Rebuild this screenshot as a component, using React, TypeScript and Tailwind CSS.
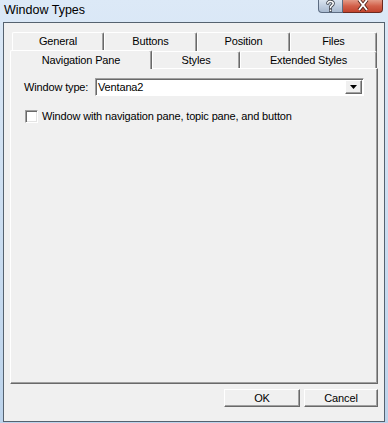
import React from "react";

const font = { fontFamily: '"Liberation Sans", Arial, sans-serif' };

function Tab({ label, w, h, top }: { label: string; w: string; h: string; top?: boolean }) {
  return (
    <div
      className={`${w} ${h} flex items-center justify-center border-l border-t border-white border-r border-r-[#696969] rounded-tl-[2px] rounded-tr-[2px] shadow-[inset_-1px_0_0_#a0a0a0] bg-[#f0f0f0] text-[11px] tracking-[-0.15px] text-black`}
    >
      <span className={top ? "-mt-[2px]" : ""}>{label}</span>
    </div>
  );
}

function ClassicButton({ label, w }: { label: string; w: string }) {
  return (
    <div
      className={`${w} h-[18px] flex items-center justify-center bg-[#f0f0f0] border border-white border-r-[#696969] border-b-[#696969] shadow-[inset_-1px_-1px_0_#a0a0a0] text-[11px] tracking-[-0.15px] text-black`}
    >
      {label}
    </div>
  );
}

export default function App() {
  return (
    <div
      className="w-[388px] h-[423px] flex flex-col bg-gradient-to-b from-[#dce9f7] to-[#bcd3eb] overflow-hidden"
      style={font}
    >
      {/* Title bar */}
      <div className="h-[22px] flex items-start shrink-0">
        <div className="pl-[4px] pt-[3px] text-[12.5px] leading-[14px] text-black">Window Types</div>
        <div className="ml-auto mr-[5px] flex items-start">
          <div className="w-[25px] h-[13px] rounded-bl-[4px] border border-t-0 border-[#5c6c82] bg-gradient-to-b from-[#d9e3ef] to-[#a9bad0] flex items-start justify-center overflow-hidden">
            <svg width="9" height="12" viewBox="0 0 9 12">
              <path d="M1.8 3.2 C1.8 0.8 7.2 0.8 7.2 3.4 C7.2 5.4 4.5 5.4 4.5 7.6" fill="none" stroke="#3a3f48" strokeWidth="3.2" strokeLinecap="round" />
              <path d="M1.8 3.2 C1.8 0.8 7.2 0.8 7.2 3.4 C7.2 5.4 4.5 5.4 4.5 7.6" fill="none" stroke="#fff" strokeWidth="1.6" strokeLinecap="round" />
              <rect x="3" y="8.8" width="3" height="3" fill="#3a3f48" />
              <rect x="3.7" y="9.5" width="1.6" height="1.6" fill="#fff" />
            </svg>
          </div>
          <div className="w-[40px] h-[13px] rounded-br-[4px] border border-t-0 border-l-0 border-[#6b2a20] bg-gradient-to-b from-[#e39a87] via-[#d2604a] to-[#c1432d] flex items-start justify-center overflow-hidden">
            <svg width="12" height="11" viewBox="0 0 12 11">
              <path d="M2 0 L10 10 M10 0 L2 10" stroke="#4a1a12" strokeWidth="3.6" />
              <path d="M2 0 L10 10 M10 0 L2 10" stroke="#fff" strokeWidth="2" />
            </svg>
          </div>
        </div>
      </div>

      {/* Client area */}
      <div className="flex-1 mx-[3px] mb-[1px] border border-[#55626f] bg-[#f0f0f0] flex flex-col pt-[9px] px-[6px] pb-[14px]">
        {/* Tab row 1 */}
        <div className="h-[18px] flex ml-[2px]">
          <Tab label="General" w="w-[92px]" h="h-[20px]" top />
          <Tab label="Buttons" w="w-[93px]" h="h-[20px]" top />
          <Tab label="Position" w="w-[93px]" h="h-[20px]" top />
          <Tab label="Files" w="w-[87px]" h="h-[20px]" top />
        </div>
        {/* Tab row 2 */}
        <div className="h-[18px] flex items-end relative z-10">
          <div className="w-[142px] h-[19px] -mb-[1px] flex justify-center pt-[1px] border-l border-t border-white border-r border-r-[#696969] rounded-tl-[2px] rounded-tr-[2px] shadow-[inset_-1px_0_0_#a0a0a0] bg-[#f0f0f0] text-[11px] tracking-[-0.15px] text-black">
            Navigation Pane
          </div>
          <Tab label="Styles" w="w-[88px]" h="h-[17px]" />
          <Tab label="Extended Styles" w="w-[137px]" h="h-[17px]" />
        </div>

        {/* Panel */}
        <div className="flex-1 border border-white border-r-[#696969] border-b-[#696969] shadow-[inset_-1px_-1px_0_#a0a0a0] pt-[9px] pl-[13px] pr-[13px] flex flex-col text-[11px] tracking-[-0.15px] text-black">
          <div className="flex items-center h-[18px]">
            <span className="w-[71px]">Window type:</span>
            <div className="w-[269px] h-[18px] bg-white border border-[#a0a0a0] border-r-white border-b-white shadow-[inset_1px_1px_0_#696969] flex items-center">
              <span className="pl-[2px] flex-1">Ventana2</span>
              <div className="w-[17px] h-[14px] mr-[1px] bg-[#f0f0f0] border border-white border-r-[#696969] border-b-[#696969] shadow-[inset_-1px_-1px_0_#a0a0a0] flex items-center justify-center">
                <svg width="7" height="4" viewBox="0 0 7 4">
                  <polygon points="0,0 7,0 3.5,4" fill="#000" />
                </svg>
              </div>
            </div>
          </div>
          <div className="flex items-center mt-[14px] h-[13px]">
            <div className="w-[13px] h-[13px] bg-white border border-[#a0a0a0] border-r-white border-b-white shadow-[inset_1px_1px_0_#696969,inset_-1px_-1px_0_#e3e3e3] ml-[1px]" />
            <span className="ml-[4px]">Window with navigation pane, topic pane, and button</span>
          </div>
        </div>

        {/* Buttons */}
        <div className="flex justify-end gap-[4px] mt-[5px]">
          <ClassicButton label="OK" w="w-[76px]" />
          <ClassicButton label="Cancel" w="w-[74px]" />
        </div>
      </div>
    </div>
  );
}
